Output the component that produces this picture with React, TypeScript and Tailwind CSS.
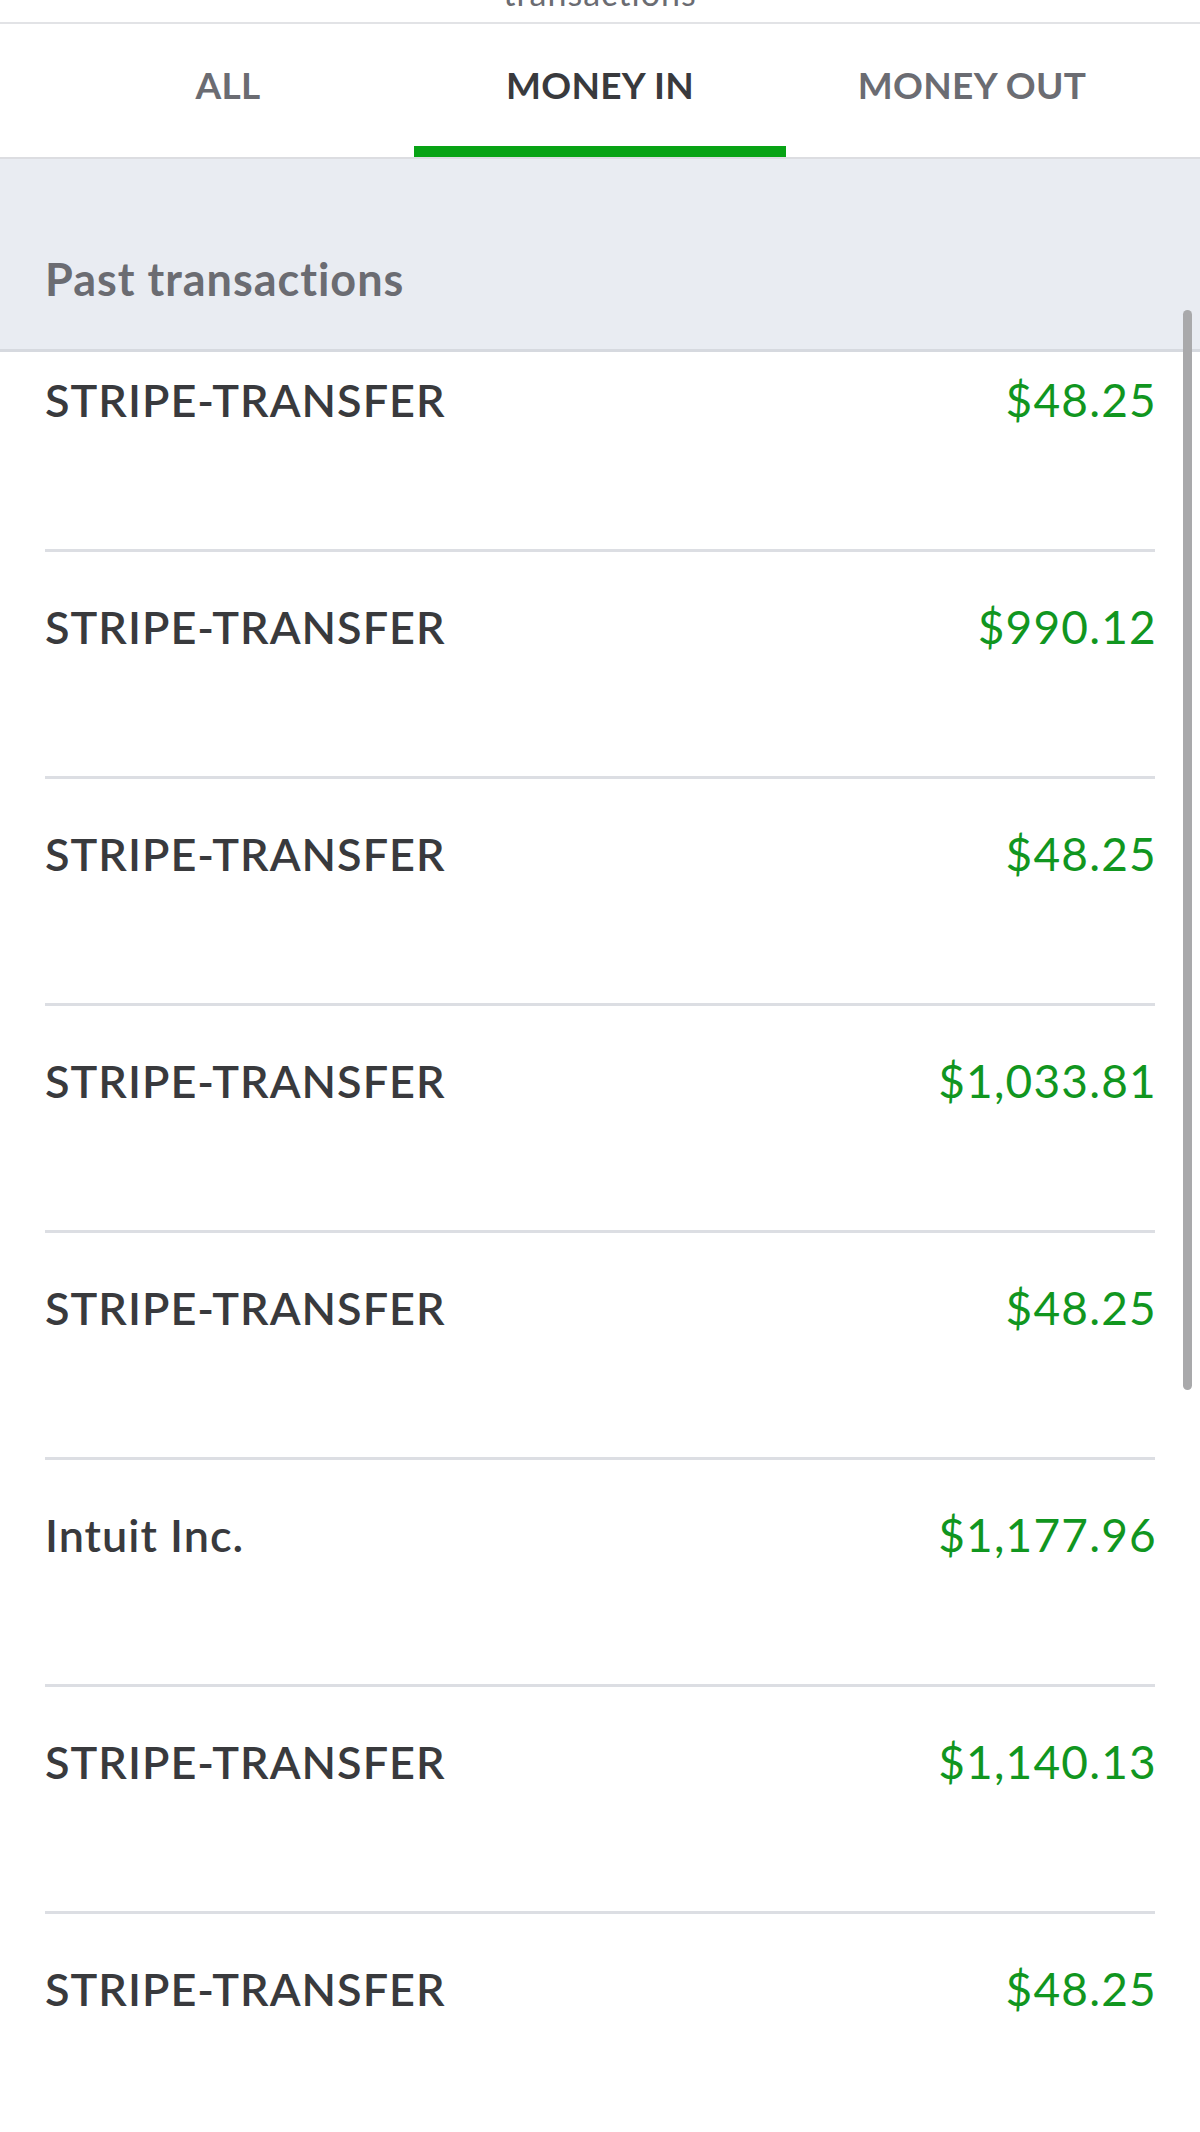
import React from 'react';

type Txn = { name: string; amount: string };

const txns: Txn[] = [
  { name: 'STRIPE-TRANSFER', amount: '$48.25' },
  { name: 'STRIPE-TRANSFER', amount: '$990.12' },
  { name: 'STRIPE-TRANSFER', amount: '$48.25' },
  { name: 'STRIPE-TRANSFER', amount: '$1,033.81' },
  { name: 'STRIPE-TRANSFER', amount: '$48.25' },
  { name: 'Intuit Inc.', amount: '$1,177.96' },
  { name: 'STRIPE-TRANSFER', amount: '$1,140.13' },
  { name: 'STRIPE-TRANSFER', amount: '$48.25' },
];

const tabs = [
  { label: 'ALL', active: false },
  { label: 'MONEY IN', active: true },
  { label: 'MONEY OUT', active: false },
];

const App: React.FC = () => {
  return (
    <div className="relative h-[2132px] w-[1200px] overflow-hidden bg-white flex flex-col font-['Lato',sans-serif]">
      {/* title, scrolled mostly out of view */}
      <div className="h-[24px] shrink-0 overflow-hidden border-b-2 border-[#e2e3e6] flex justify-center">
        <span className="-mt-[24px] text-[34px] leading-[34px] text-[#6b6c72] tracking-[1px]">transactions</span>
      </div>

      <div className="flex h-[135px] shrink-0 px-[42px] border-b-2 border-[#dcdde1]">
        {tabs.map((tab) => (
          <div key={tab.label} className="relative flex-1 flex items-center justify-center pb-[11px]">
            <span
              className={`text-[37px] font-bold tracking-[0.3px] ${
                tab.active ? 'text-[#393a3d]' : 'text-[#6b6c72]'
              }`}
            >
              {tab.label}
            </span>
            {tab.active && <div className="absolute left-0 right-0 bottom-0 h-[11px] bg-[#08a315]" />}
          </div>
        ))}
      </div>

      <div className="h-[193px] shrink-0 bg-[#e9ecf2] border-b-[3px] border-[#d6d9df] px-[45px] pt-[96px]">
        <h2 className="text-[45px] leading-[48px] font-bold text-[#6b6c72] tracking-[1px]">Past transactions</h2>
      </div>

      <div className="flex-1 overflow-hidden">
        <ul className="-mt-[27px]">
          {txns.map((t, i) => (
            <li
              key={i}
              className="mx-[45px] h-[227px] border-b-[3px] border-[#dcdee3] pt-[50px] flex justify-between items-start"
            >
              <span className="text-[45px] leading-[50px] font-semibold text-[#393a3d] tracking-[1px]">{t.name}</span>
              <span className="text-[46px] leading-[50px] text-[#11961f] tracking-[1.2px] -mr-[2px]">{t.amount}</span>
            </li>
          ))}
        </ul>
      </div>

      {/* scrollbar overlay */}
      <div className="absolute right-[8px] top-[310px] w-[9px] h-[1080px] rounded-full bg-[#a9a9ab]" />
    </div>
  );
};

export default App;
